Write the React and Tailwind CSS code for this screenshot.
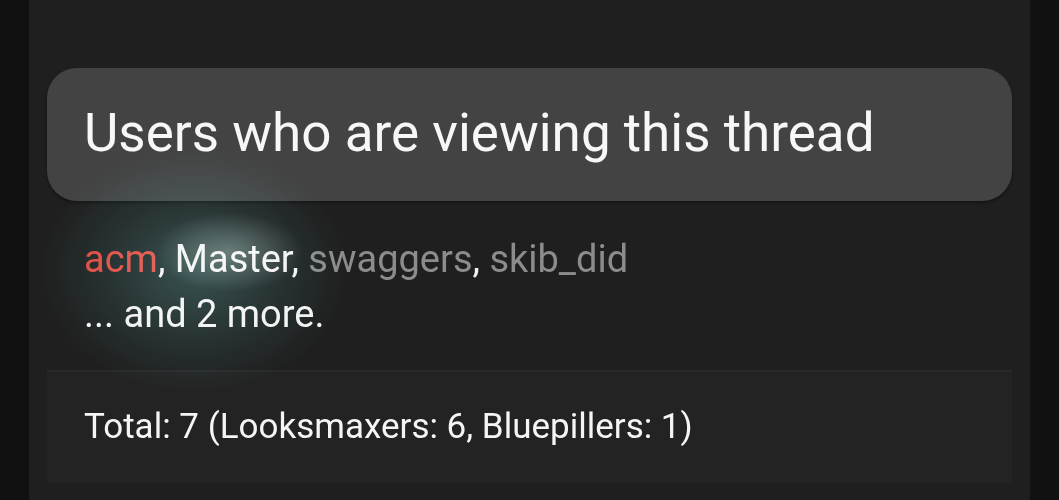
import React from 'react';

const viewers = [
  { name: 'acm', className: 'text-[#e0473c]' },
  { name: 'Master', className: 'text-[#f2f2f2]' },
  { name: 'swaggers', className: 'text-[#8c8c8c]' },
  { name: 'skib_did', className: 'text-[#8c8c8c]' },
];

export default function App() {
  return (
    <div className="w-[1059px] h-[500px] bg-[#111111] flex overflow-hidden font-['Roboto',sans-serif]">
      <div className="relative mx-[29px] flex-1 bg-[#1f1f1f] pt-[68px] px-[18px]">
        <div className="h-[133px] rounded-[30px] bg-[#434343] flex items-center px-[37px] shadow-[0_2px_3px_rgba(0,0,0,0.35)]">
          <h2 className="text-[53px] leading-none text-[#f7f7f7] pb-[2px]">
            Users who are viewing this thread
          </h2>
        </div>

        <div className="px-[37px] pt-[31px] h-[169px] text-[38px] leading-[55px]">
          <p>
            {viewers.map((v, i) => (
              <span key={v.name}>
                <span className={v.className}>{v.name}</span>
                {i < viewers.length - 1 && <span className="text-[#f2f2f2]">, </span>}
              </span>
            ))}
          </p>
          <p className="text-[#f2f2f2]">... and 2 more.</p>
        </div>

        <div className="h-[113px] bg-[#232323] border-t-2 border-[#292929] flex items-center px-[37px]">
          <p className="text-[35px] leading-none text-[#f5f5f5] pb-[2px]">
            Total: 7 (Looksmaxers: 6, Bluepillers: 1)
          </p>
        </div>

        {/* teal glow over the viewer list */}
        <div className="pointer-events-none absolute left-[15px] top-[150px] w-[300px] h-[240px] rounded-[40%] mix-blend-screen bg-[radial-gradient(ellipse_at_center,rgba(55,115,112,0.5),rgba(40,85,85,0.22)_45%,transparent_72%)]" />
        <div className="pointer-events-none absolute left-[125px] top-[212px] w-[150px] h-[80px] rounded-full mix-blend-screen bg-[radial-gradient(ellipse_at_center,rgba(200,225,220,0.35),transparent_70%)]" />
      </div>
    </div>
  );
}
